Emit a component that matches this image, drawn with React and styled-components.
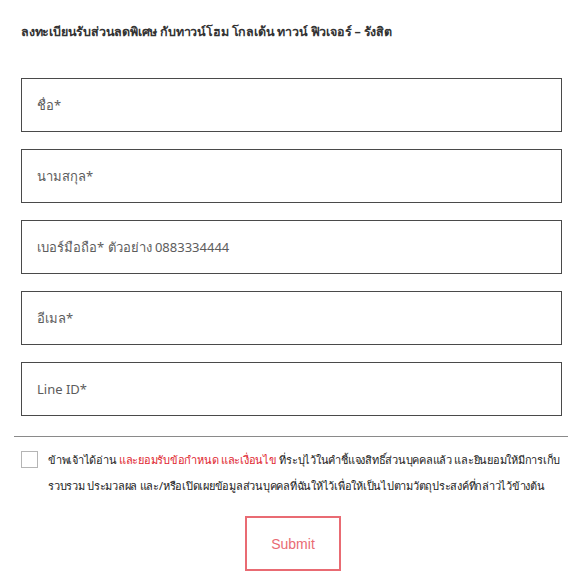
import styled, { createGlobalStyle } from 'styled-components'

const GlobalStyle = createGlobalStyle`
  body {
    margin: 0;
    background: #ffffff;
    font-family: 'Noto Sans', 'Liberation Sans', sans-serif;
  }
`

const Page = styled.div`
  width: 586px;
  padding: 21px 14px 0;
  box-sizing: border-box;
`

const Title = styled.h2`
  margin: 0 0 0 7px;
  font-size: 12.5px;
  font-weight: 700;
  letter-spacing: -0.2px;
  color: #333333;
  line-height: 22px;
`

const Fields = styled.div`
  display: flex;
  flex-direction: column;
  gap: 17px;
  margin: 35px 10px 0 7px;
`

const Field = styled.input`
  height: 54px;
  box-sizing: border-box;
  border: 1px solid #4a4a4a;
  padding: 0 15px;
  font-family: inherit;
  font-size: 13px;
  color: #333333;
  outline: none;

  &::placeholder {
    color: #5c5c5c;
  }
`

const Divider = styled.hr`
  margin: 20px 4px 0 0;
  border: 0;
  border-top: 1px solid #8a8a8a;
`

const ConsentRow = styled.label`
  display: flex;
  gap: 10px;
  margin: 10px 0 0 7px;
  font-size: 11px;
  letter-spacing: -0.25px;
  line-height: 26px;
  color: #222222;
  white-space: nowrap;
`

const Box = styled.span`
  flex: none;
  width: 15px;
  height: 15px;
  margin-top: 4px;
  border: 1px solid #b5b5b5;
`

const Red = styled.span`
  color: #e0262f;
`

const Actions = styled.div`
  display: flex;
  justify-content: center;
  margin-top: 17px;
`

const SubmitButton = styled.button`
  width: 96px;
  height: 55px;
  background: #ffffff;
  border: 2px solid #e96b73;
  color: #e96b73;
  font-family: 'Liberation Sans', sans-serif;
  font-size: 14px;
  cursor: pointer;
`

const fields = [
  'ชื่อ*',
  'นามสกุล*',
  'เบอร์มือถือ* ตัวอย่าง 0883334444',
  'อีเมล*',
  'Line ID*',
]

export default function App() {
  return (
    <>
      <GlobalStyle />
      <Page>
        <Title>ลงทะเบียนรับส่วนลดพิเศษ กับทาวน์โฮม โกลเด้น ทาวน์ ฟิวเจอร์ – รังสิต</Title>
        <Fields>
          {fields.map((placeholder) => (
            <Field key={placeholder} placeholder={placeholder} />
          ))}
        </Fields>
        <Divider />
        <ConsentRow>
          <Box />
          <span>
            ข้าพเจ้าได้อ่าน <Red>และยอมรับข้อกำหนด และเงื่อนไข</Red> ที่ระบุไว้ในคำชี้แจงสิทธิ์ส่วนบุคคลแล้ว และยินยอมให้มีการเก็บ
            <br />
            รวบรวม ประมวลผล และ/หรือเปิดเผยข้อมูลส่วนบุคคลที่ฉันให้ไว้เพื่อให้เป็นไปตามวัตถุประสงค์ที่กล่าวไว้ข้างต้น
          </span>
        </ConsentRow>
        <Actions>
          <SubmitButton>Submit</SubmitButton>
        </Actions>
      </Page>
    </>
  )
}
